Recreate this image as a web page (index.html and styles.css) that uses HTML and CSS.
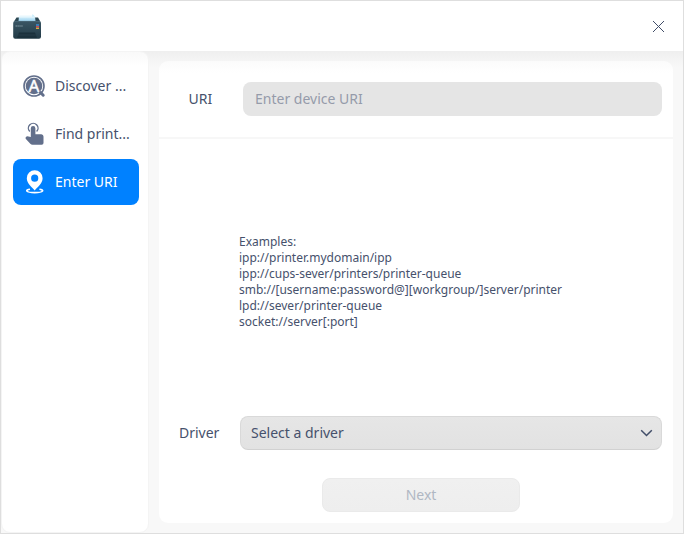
FILE: index.html
```html
<!DOCTYPE html>
<html lang="en">
<head>
<meta charset="utf-8">
<title>Add Printer</title>
<link rel="stylesheet" href="styles.css">
</head>
<body>
<div class="window">
  <header class="titlebar">
    <svg class="app-icon" width="30" height="28" viewBox="0 0 30 28">
      <defs>
        <linearGradient id="body" x1="0" y1="0" x2="0" y2="1"><stop offset="0" stop-color="#3a5664"/><stop offset="1" stop-color="#223a46"/></linearGradient>
        <linearGradient id="paper" x1="0" y1="0" x2="0" y2="1"><stop offset="0" stop-color="#d9f1fc"/><stop offset="1" stop-color="#9ed3ef"/></linearGradient>
      </defs>
      <path d="M4.500 4.500h21.500l2.300 4H2z" fill="#2b4652"/>
      <path d="M7 3.500h16l.5 4.700H6.500z" fill="url(#paper)"/>
      <path d="M7.500 2.500h13l2 2h-15z" fill="#e8f7fd"/>
      <path d="M20.500 1l2.500 2.500-3 .3z" fill="#c9ecfb"/>
      <rect x="1.200" y="8" width="27.800" height="17.800" rx="2" fill="url(#body)"/>
      <path d="M2 8.400h26" stroke="#4d6a78" stroke-width=".8"/>
      <path d="M7 19.500h16l2 5.500H5z" fill="#1b313c"/>
      <path d="M6 22h18" stroke="#29404b" stroke-width=".8"/>
      <path d="M3.500 13h7.500" stroke="#8ba2ac" stroke-width=".9" stroke-dasharray="1.500 .4"/>
      <path d="M24 11h3v2h-3z" fill="#397db5"/>
      <path d="M24 13h3v1.700h-3z" fill="#c94a55"/>
      <path d="M24 14.700h3V16h-3z" fill="#c9b142"/>
    </svg>
    <svg class="close" width="11" height="11" viewBox="0 0 11 11"><path d="M0 0l11 11M11 0L0 11" stroke="#414d68" stroke-width="1" fill="none"/></svg>
  </header>
  <div class="content">
    <nav class="sidebar">
      <div class="item">
        <svg class="item-icon" width="24" height="24" viewBox="0 0 24 24">
          <circle cx="12" cy="12" r="10" fill="none" stroke="#626f8b" stroke-width="1.600"/>
          <circle cx="12" cy="12" r="8.300" fill="#626f8b"/>
          <text class="icon-letter" x="12" y="17.500" text-anchor="middle">A</text>
          <path d="M18.500 18.500l2.700 2.700" stroke="#626f8b" stroke-width="3" stroke-linecap="round"/>
        </svg>
        <span>Discover ...</span>
      </div>
      <div class="item">
        <svg class="item-icon" width="24" height="24" viewBox="0 0 24 24">
          <path d="M8 9.200a4.800 4.800 0 1 1 6.800 0" transform="translate(-.2 .4)" fill="none" stroke="#626f8b" stroke-width="1.400"/>
          <path d="M8.800 6.200a2.300 2.300 0 0 1 4.600 0V12.300h6q2.100.2 2.100 2.200V21q0 1.800-1.800 1.800H10.500q-1.300 0-2.200-1L3.900 17.100Q2.900 16 4.100 14.800q1-.9 2.400-.4l2.300.6z" fill="#626f8b"/>
        </svg>
        <span>Find print...</span>
      </div>
      <div class="item active">
        <svg class="item-icon" width="24" height="24" viewBox="0 0 24 24">
          <path d="M12.700.3a7.900 7.900 0 0 0-7.900 7.900c0 5.400 5.600 9.200 7.900 12.300 2.300-3.100 7.900-6.900 7.900-12.300A7.900 7.900 0 0 0 12.700.3zm0 4.300a3.600 3.600 0 1 1 0 7.200 3.600 3.600 0 0 1 0-7.200z" fill="#fff" fill-rule="evenodd"/>
          <path d="M8 19.200c-5 .6-4.800 3.400 4.700 3.400s9.700-2.800 4.700-3.400" fill="none" stroke="#fff" stroke-width="1.600"/>
        </svg>
        <span>Enter URI</span>
      </div>
    </nav>
    <main class="main">
      <section class="card">
        <div class="uri-row"><label class="uri-label">URI</label><div class="uri-input">Enter device URI</div></div>
        <div class="examples">Examples:<br>ipp://printer.mydomain/ipp<br>ipp://cups-sever/printers/printer-queue<br>smb://[username:password@][workgroup/]server/printer<br>lpd://sever/printer-queue<br>socket://server[:port]</div>
        <div class="driver-row"><label class="driver-label">Driver</label>
          <div class="select"><span>Select a driver</span>
            <svg width="13" height="8" viewBox="0 0 13 8"><path d="M1.200 1.200l5.300 5.300 5.300-5.300" fill="none" stroke="#414d68" stroke-width="1.500"/></svg>
          </div>
        </div>
        <button class="next" disabled>Next</button>
      </section>
    </main>
  </div>
</div>
</body>
</html>
```
FILE: styles.css
```css
* { box-sizing: border-box; }
body { margin: 0; font: 14px/20px "Noto Sans", sans-serif; color: #46516c; }
.window { width: 684px; height: 534px; border: 1px solid #dedede; background: #fff; display: flex; flex-direction: column; }
.titlebar { height: 50px; display: flex; align-items: center; justify-content: space-between; padding: 0 19px 0 11px; }
.app-icon { margin-top: 2px; }
.close { display: block; margin-top: 1px; }
.content { flex: 1; display: flex; background: linear-gradient(#efefef, #f8f8f8 16px); }
.sidebar { width: 148px; border: 1px solid #f4f4f4; border-radius: 9px; background: linear-gradient(#f9f9f9, #fff 14px); padding: 11px 9px 0 11px; }
.item { height: 46px; margin-bottom: 2px; border-radius: 8px; display: flex; align-items: center; padding-left: 9px; white-space: nowrap; }
.item-icon { flex: none; margin-right: 9px; }
.icon-letter { font: 400 17px "Noto Sans", sans-serif; fill: #fff; stroke: #fff; stroke-width: .5px; }
.active { background: #0081ff; color: #fff; }
.main { flex: 1; padding: 10px; }
.card { height: 462px; border-radius: 9px; background: linear-gradient(#fbfbfb, #fff 12px); display: flex; flex-direction: column; }
.uri-row { height: 78px; display: flex; align-items: center; border-bottom: 2px solid #f7f7f7; padding-right: 11px; }
.uri-label { width: 84px; padding-left: 29.5px; }
.uri-input { flex: 1; height: 34px; border-radius: 8px; background: #e5e5e5; color: #959baa; padding: 7px 12px; }
.examples { margin: 95px 0 86px 80px; font-size: 12px; line-height: 16px; white-space: nowrap; }
.driver-row { display: flex; align-items: center; padding-right: 11px; }
.driver-label { width: 81px; padding-left: 20px; }
.select { flex: 1; height: 34px; display: flex; align-items: center; justify-content: space-between; border: 1px solid #d9d9d9; border-bottom-color: #d1d1d1; border-radius: 8px; background: linear-gradient(#e6e6e6, #e2e2e2); padding: 0 8px 0 10px; }
.next { width: 198px; height: 34px; margin: 28px 0 0 163px; border: 1px solid #eaeaea; border-radius: 8px; background: linear-gradient(#f0f0f0, #eee); color: #b0b7c3; font: inherit; }
```
